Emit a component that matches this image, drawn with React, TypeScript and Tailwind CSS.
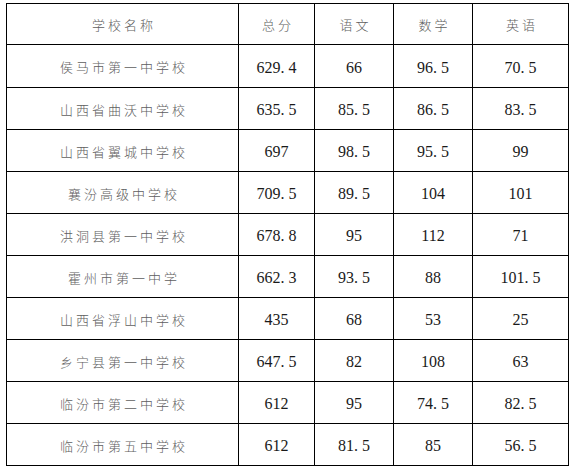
import React from "react";

const rows: [string, string, string, string, string][] = [
  ["侯马市第一中学校", "629.4", "66", "96.5", "70.5"],
  ["山西省曲沃中学校", "635.5", "85.5", "86.5", "83.5"],
  ["山西省翼城中学校", "697", "98.5", "95.5", "99"],
  ["襄汾高级中学校", "709.5", "89.5", "104", "101"],
  ["洪洞县第一中学校", "678.8", "95", "112", "71"],
  ["霍州市第一中学", "662.3", "93.5", "88", "101.5"],
  ["山西省浮山中学校", "435", "68", "53", "25"],
  ["乡宁县第一中学校", "647.5", "82", "108", "63"],
  ["临汾市第二中学校", "612", "95", "74.5", "82.5"],
  ["临汾市第五中学校", "612", "81.5", "85", "56.5"],
];

const headers = ["学校名称", "总分", "语文", "数学", "英语"];

const cn =
  "flex items-center justify-center bg-white pt-[2px] text-[13px] tracking-[3px] text-[#5e5e5e] [font-family:'Noto_Sans_CJK_SC',sans-serif] font-light";
const num =
  "flex items-center justify-center bg-white pt-[3px] text-[16px] leading-none text-[#1a1a1a] [font-family:'Liberation_Serif',serif]";

function Num({ v }: { v: string }) {
  const parts = v.split(".");
  return (
    <span className="whitespace-nowrap">
      {parts[0]}
      {parts.length > 1 && (
        <>
          <span className="inline-block w-[8px]">.</span>
          {parts[1]}
        </>
      )}
    </span>
  );
}

export default function App() {
  return (
    <div className="w-[575px] h-[472px] bg-white pl-[6px] pt-[3px]">
      <div className="grid w-[563px] grid-cols-[231px_75px_78px_78px_95px] grid-rows-[40px_42px_repeat(9,41px)] gap-px bg-black p-px">
        {headers.map((h, i) => (
          <div key={i} className={cn}>
            <span className="pl-[3px]">{h}</span>
          </div>
        ))}
        {rows.map((r, ri) => (
          <React.Fragment key={ri}>
            <div className={cn}>
              <span className="pl-[3px]">{r[0]}</span>
            </div>
            {r.slice(1).map((v, ci) => (
              <div key={ci} className={num}>
                <Num v={v} />
              </div>
            ))}
          </React.Fragment>
        ))}
      </div>
    </div>
  );
}
